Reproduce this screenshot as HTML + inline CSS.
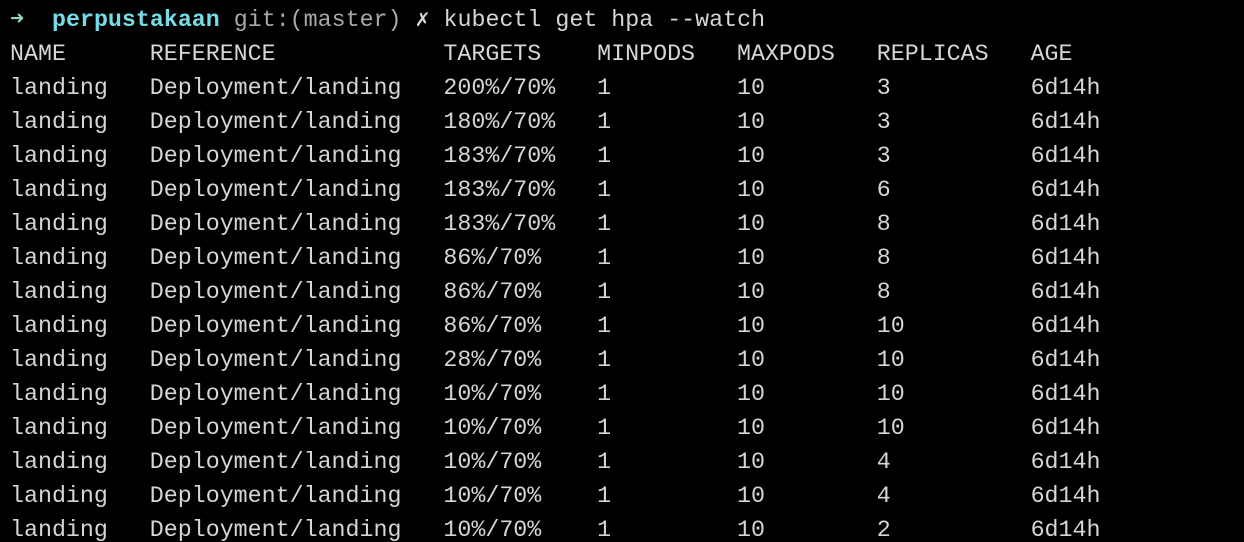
<!DOCTYPE html>
<html><head><meta charset="utf-8"><style>
html,body{margin:0;background:#000;width:1244px;height:542px;overflow:hidden}
pre{margin:0;padding:2px 0 0 10px;font-family:"Liberation Mono","DejaVu Sans Mono",monospace;font-size:23.3px;line-height:34px;color:#d6d6d6;letter-spacing:0}
.a{color:#8fd6c0;font-weight:bold;font-family:"DejaVu Sans Mono",monospace}.c{color:#74dde6;font-weight:bold}.g{color:#a8a8a8}
</style></head><body><pre><span class="a">➜</span>  <span class="c">perpustakaan</span> <span class="g">git:(</span><span class="g">master</span><span class="g">)</span> ✗ kubectl get hpa --watch
NAME      REFERENCE            TARGETS    MINPODS   MAXPODS   REPLICAS   AGE
landing   Deployment/landing   200%/70%   1         10        3          6d14h
landing   Deployment/landing   180%/70%   1         10        3          6d14h
landing   Deployment/landing   183%/70%   1         10        3          6d14h
landing   Deployment/landing   183%/70%   1         10        6          6d14h
landing   Deployment/landing   183%/70%   1         10        8          6d14h
landing   Deployment/landing   86%/70%    1         10        8          6d14h
landing   Deployment/landing   86%/70%    1         10        8          6d14h
landing   Deployment/landing   86%/70%    1         10        10         6d14h
landing   Deployment/landing   28%/70%    1         10        10         6d14h
landing   Deployment/landing   10%/70%    1         10        10         6d14h
landing   Deployment/landing   10%/70%    1         10        10         6d14h
landing   Deployment/landing   10%/70%    1         10        4          6d14h
landing   Deployment/landing   10%/70%    1         10        4          6d14h
landing   Deployment/landing   10%/70%    1         10        2          6d14h</pre></body></html>
